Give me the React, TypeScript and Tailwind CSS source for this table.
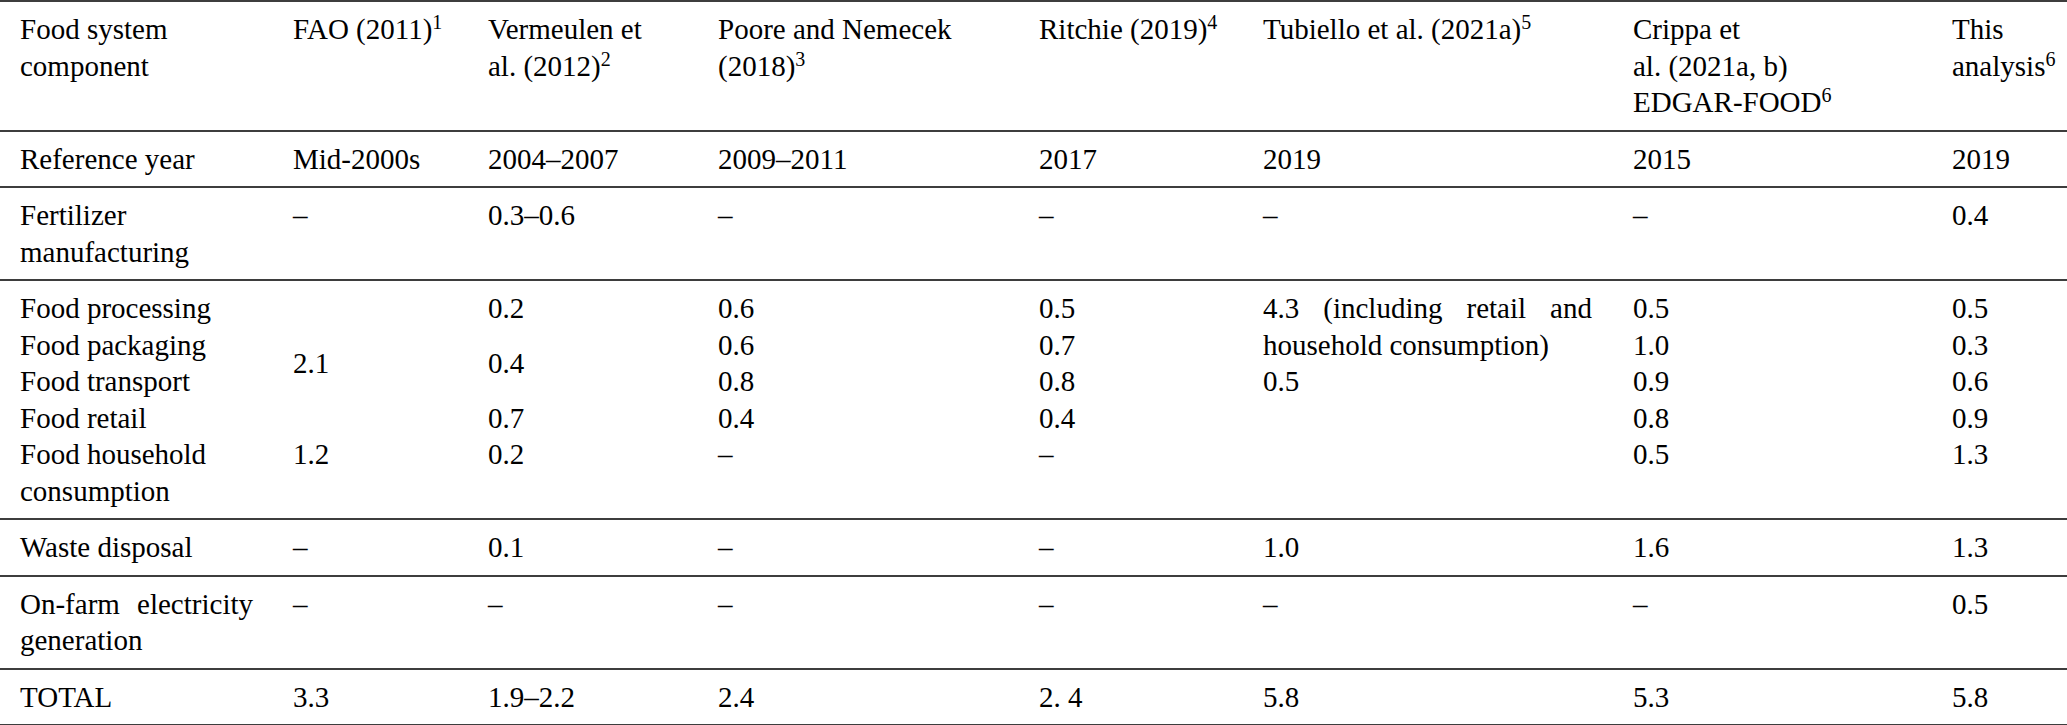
import React from "react";

const cols =
  "grid grid-cols-[273px_195px_230px_321px_224px_370px_319px_1fr] pl-[20px]";
const row = `${cols} border-t-2 border-[#3d3d3d] py-[9px]`;

function Sup({ children }: { children: React.ReactNode }) {
  return <sup className="text-[20px]">{children}</sup>;
}

function L({ children }: { children?: React.ReactNode }) {
  return <div className="h-[36.5px] whitespace-nowrap">{children}</div>;
}

function Span({ n, children }: { n: number; children: React.ReactNode }) {
  const h = n === 4 ? "h-[146px]" : "h-[73px]";
  return <div className={`${h} flex items-center whitespace-nowrap`}>{children}</div>;
}

function Col({ items }: { items: string[] }) {
  return (
    <div>
      {items.map((t, i) => (
        <L key={i}>{t}</L>
      ))}
    </div>
  );
}

export default function App() {
  return (
    <div className="w-[2067px] h-[725px] bg-white text-black [font-family:'Liberation_Serif','Times_New_Roman',serif] text-[29px] leading-[36.5px] overflow-hidden">
      {/* Header */}
      <div className={row}>
        <div>
          <L>Food system</L>
          <L>component</L>
        </div>
        <div>
          <L>
            FAO (2011)<Sup>1</Sup>
          </L>
        </div>
        <div>
          <L>Vermeulen et</L>
          <L>
            al. (2012)<Sup>2</Sup>
          </L>
        </div>
        <div>
          <L>Poore and Nemecek</L>
          <L>
            (2018)<Sup>3</Sup>
          </L>
        </div>
        <div>
          <L>
            Ritchie (2019)<Sup>4</Sup>
          </L>
        </div>
        <div>
          <L>
            Tubiello et al. (2021a)<Sup>5</Sup>
          </L>
        </div>
        <div>
          <L>Crippa et</L>
          <L>al. (2021a, b)</L>
          <L>
            EDGAR-FOOD<Sup>6</Sup>
          </L>
        </div>
        <div>
          <L>This</L>
          <L>
            analysis<Sup>6</Sup>
          </L>
        </div>
      </div>

      {/* Reference year */}
      <div className={row}>
        <L>Reference year</L>
        <L>Mid-2000s</L>
        <L>2004–2007</L>
        <L>2009–2011</L>
        <L>2017</L>
        <L>2019</L>
        <L>2015</L>
        <L>2019</L>
      </div>

      {/* Fertilizer */}
      <div className={row}>
        <div>
          <L>Fertilizer</L>
          <L>manufacturing</L>
        </div>
        <L>–</L>
        <L>0.3–0.6</L>
        <L>–</L>
        <L>–</L>
        <L>–</L>
        <L>–</L>
        <L>0.4</L>
      </div>

      {/* Food group */}
      <div className={row}>
        <Col
          items={[
            "Food processing",
            "Food packaging",
            "Food transport",
            "Food retail",
            "Food household",
            "consumption",
          ]}
        />
        <div>
          <Span n={4}>2.1</Span>
          <L>1.2</L>
        </div>
        <div>
          <L>0.2</L>
          <Span n={2}>0.4</Span>
          <L>0.7</L>
          <L>0.2</L>
        </div>
        <Col items={["0.6", "0.6", "0.8", "0.4", "–"]} />
        <Col items={["0.5", "0.7", "0.8", "0.4", "–"]} />
        <div>
          <div className="w-[329px] text-justify">
            4.3 (including retail and household consumption)
          </div>
          <L>0.5</L>
        </div>
        <Col items={["0.5", "1.0", "0.9", "0.8", "0.5"]} />
        <Col items={["0.5", "0.3", "0.6", "0.9", "1.3"]} />
      </div>

      {/* Waste disposal */}
      <div className={row}>
        <L>Waste disposal</L>
        <L>–</L>
        <L>0.1</L>
        <L>–</L>
        <L>–</L>
        <L>1.0</L>
        <L>1.6</L>
        <L>1.3</L>
      </div>

      {/* On-farm electricity */}
      <div className={row}>
        <div>
          <div className="h-[36.5px] w-[233px] text-justify [text-align-last:justify]">
            On-farm electricity
          </div>
          <L>generation</L>
        </div>
        <L>–</L>
        <L>–</L>
        <L>–</L>
        <L>–</L>
        <L>–</L>
        <L>–</L>
        <L>0.5</L>
      </div>

      {/* TOTAL */}
      <div className={`${row} border-b-2`}>
        <L>TOTAL</L>
        <L>3.3</L>
        <L>1.9–2.2</L>
        <L>2.4</L>
        <L>2. 4</L>
        <L>5.8</L>
        <L>5.3</L>
        <L>5.8</L>
      </div>
    </div>
  );
}
